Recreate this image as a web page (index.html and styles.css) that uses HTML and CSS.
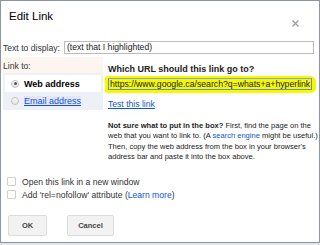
FILE: index.html
```html
<!DOCTYPE html>
<html>
<head>
    <title>Edit Link</title>
    <meta name="viewport" content="width=device-width, initial-scale=1.0">
    <link rel="stylesheet" href="styles.css">
</head>
<body>
    <div class="dialog">
        <div class="title-row">
            <h1>Edit Link</h1>
            <svg class="close" width="7" height="7" viewBox="0 0 7 7">
                <path d="M0.5 0.5 L6.5 6.5 M6.5 0.5 L0.5 6.5" stroke="#999" stroke-width="1.2"/>
            </svg>
        </div>

        <div class="display-row">
            <label>Text to display:</label>
            <div class="text-field">(text that I highlighted)</div>
        </div>

        <div class="link-body">
            <div class="link-side">
                <div class="link-to">Link to:</div>
                <div class="link-types">
                    <div class="link-type selected">
                        <span class="radio checked"></span>
                        <span>Web address</span>
                    </div>
                    <div class="link-type">
                        <span class="radio"></span>
                        <a class="email">Email address</a>
                    </div>
                </div>
            </div>

            <div class="link-main">
                <h2>Which URL should this link go to?</h2>
                <div class="marker">
                    <div class="url-field">https://www.google.ca/search?q=whats+a+hyperlink</div>
                </div>
                <a class="test-link">Test this link</a>
                <p class="hint">
                    <b>Not sure what to put in the box?</b> First, find the page on the<br>
                    web that you want to link to. (A <span class="blue">search engine</span> might be useful.)<br>
                    Then, copy the web address from the box in your browser's<br>
                    address bar and paste it into the box above.
                </p>
            </div>
        </div>

        <div class="options">
            <div class="option"><span class="check"></span>Open this link in a new window</div>
            <div class="option"><span class="check"></span>Add 'rel=nofollow' attribute (<span class="blue">Learn more</span>)</div>
        </div>

        <div class="buttons">
            <button class="ok">OK</button>
            <button class="cancel">Cancel</button>
        </div>
    </div>
</body>
</html>
```

FILE: styles.css
```css
* {
    margin: 0;
    padding: 0;
    box-sizing: border-box;
}

body {
    background: #e2e6ea;
    font-family: "Liberation Sans", Arial, sans-serif;
    color: #333;
    font-size: 8.6px;
}

.dialog {
    width: 320px;
    height: 243px;
    background: #fff;
    border: 1px solid #8d969e;
    overflow: hidden;
}

.title-row {
    display: flex;
    justify-content: space-between;
    padding: 8px 0 0 8px;
}

h1 {
    font-size: 11.5px;
    font-weight: normal;
    line-height: 14px;
    color: #000;
}

.close {
    margin: 11px 20px 0 0;
}

.display-row {
    display: flex;
    align-items: center;
    margin-top: 14px;
    padding-left: 2px;
}

.display-row label {
    width: 61px;
}

.text-field {
    width: 250px;
    height: 13px;
    border: 1px solid #bcbcbc;
    padding-left: 2px;
    line-height: 11px;
    color: #222;
}

.link-body {
    display: grid;
    grid-template-columns: 102px 1fr;
    gap: 5px;
    margin-top: 3px;
}

.link-to {
    background: #fdf6f0;
    height: 16px;
    padding: 4px 0 0 2px;
}

.link-types {
    background: #edf0f6;
    margin-left: 2px;
    padding: 2px 2px 1px;
}

.link-type {
    display: flex;
    align-items: center;
    gap: 5px;
    height: 17px;
    padding-left: 6px;
    font-size: 9px;
    color: #000;
}

.link-type.selected {
    background: #fff;
    font-weight: bold;
}

.radio {
    width: 8px;
    height: 8px;
    border-radius: 50%;
    border: 1px solid #c2c2c2;
    background: linear-gradient(#fafafa, #e4e4e4);
    position: relative;
}

.radio.checked::after {
    content: "";
    position: absolute;
    left: 1.5px;
    top: 1.5px;
    width: 3px;
    height: 3px;
    border-radius: 50%;
    background: #555;
}

.email {
    color: #15c;
    text-decoration: underline;
    background: #e6e6fb;
}

.link-main h2 {
    font-size: 9px;
    line-height: 11px;
    margin-top: 7px;
    color: #222;
}

.marker {
    background: #f7f700;
    margin: 1px 0 0 -3px;
    padding: 2px 4px 3px 3px;
    border-radius: 3px 6px 5px 2px;
    width: 211px;
}

.url-field {
    height: 12px;
    border: 1px solid #5b8fe6;
    border-top-color: #7fa6e8;
    line-height: 10px;
    padding-left: 1px;
    font-size: 8.7px;
    color: #222;
    white-space: nowrap;
    overflow: hidden;
}

.test-link {
    display: block;
    margin-top: 6px;
    line-height: 11px;
    color: #15c;
    text-decoration: underline;
}

.hint {
    margin-top: 11px;
    font-size: 7.55px;
    line-height: 10.3px;
    color: #222;
    white-space: nowrap;
}

.blue {
    color: #15c;
}

.options {
    margin-top: 13px;
    padding-left: 6px;
}

.option {
    display: flex;
    align-items: center;
    height: 13px;
}

.check {
    width: 9px;
    height: 9px;
    border: 1px solid #cfcfcf;
    border-radius: 1px;
    margin-right: 6px;
}

.buttons {
    display: flex;
    gap: 20px;
    margin-top: 14px;
    padding-left: 7px;
}

.buttons button {
    height: 21px;
    background: #f2f2f2;
    border: 1px solid #dcdcdc;
    border-radius: 2px;
    font-family: "Liberation Sans", Arial, sans-serif;
    font-size: 7.5px;
    font-weight: bold;
    color: #444;
}

.ok {
    width: 39px;
}

.cancel {
    width: 47px;
}
```
